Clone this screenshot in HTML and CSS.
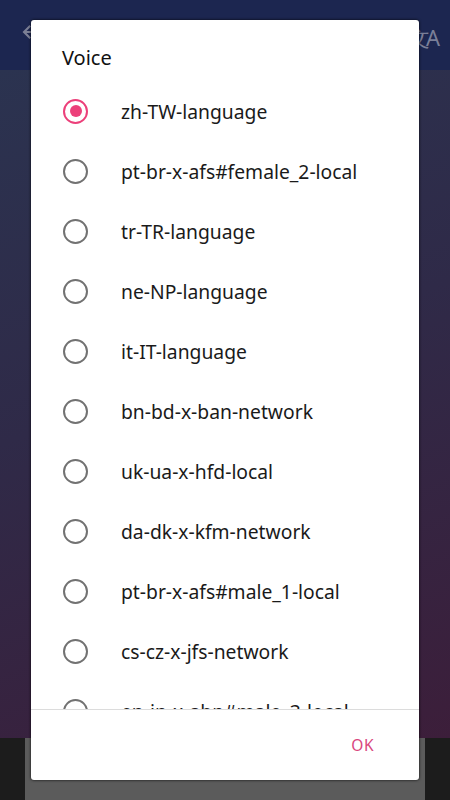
FILE: index.html
```html
<!DOCTYPE html>
<html>
<head>
<meta charset="utf-8">
<link rel="stylesheet" href="styles.css">
</head>
<body>
<div class="app">
  <div class="topbar">
    <svg class="back" width="20" height="20" viewBox="0 0 20 20"><path d="M17 9H6.5l4.5-4.5L9.5 3 2.5 10l7 7 1.5-1.5L6.5 11H17z" fill="#7b7f95"/></svg>
    <span class="trans">文A</span>
  </div>
  <div class="main"></div>
  <div class="bottom">
    <div class="panel"></div>
  </div>
</div>
<div class="dialog">
  <div class="title">Voice</div>
  <div class="list">
    <div class="item"><span class="radio on"></span><span class="label">zh-TW-language</span></div>
    <div class="item"><span class="radio"></span><span class="label">pt-br-x-afs#female_2-local</span></div>
    <div class="item"><span class="radio"></span><span class="label">tr-TR-language</span></div>
    <div class="item"><span class="radio"></span><span class="label">ne-NP-language</span></div>
    <div class="item"><span class="radio"></span><span class="label">it-IT-language</span></div>
    <div class="item"><span class="radio"></span><span class="label">bn-bd-x-ban-network</span></div>
    <div class="item"><span class="radio"></span><span class="label">uk-ua-x-hfd-local</span></div>
    <div class="item"><span class="radio"></span><span class="label">da-dk-x-kfm-network</span></div>
    <div class="item"><span class="radio"></span><span class="label">pt-br-x-afs#male_1-local</span></div>
    <div class="item"><span class="radio"></span><span class="label">cs-cz-x-jfs-network</span></div>
    <div class="item"><span class="radio"></span><span class="label">en-in-x-ahp#male_3-local</span></div>
  </div>
  <div class="footer"><span class="ok">OK</span></div>
</div>
</body>
</html>
```
FILE: styles.css
```css
html, body { margin: 0; padding: 0; }
body { width: 450px; height: 800px; overflow: hidden; font-family: "Noto Sans", "Open Sans", sans-serif; position: relative; }
.app { display: flex; flex-direction: column; height: 800px; }
.topbar { height: 70px; background: #1c2650; display: flex; align-items: center; justify-content: space-between; padding: 0 14px 0 20px; box-sizing: border-box; }
.back { margin-top: -6px; }
.trans { color: #7a7f98; font-size: 22px; margin-top: 6px; letter-spacing: -4px; }
.main { flex: 1; background: linear-gradient(160deg, #2b3350 0%, #2f2a48 45%, #3c1e3a 100%); }
.bottom { height: 62px; background: #1c1c1c; display: flex; padding: 0 25px; }
.panel { flex: 1; background: #5b5b5b; }
.dialog { position: absolute; left: 31px; top: 20px; width: 388px; height: 760px; background: #fff; border-radius: 3px; box-shadow: 0 0 3px rgba(0,0,0,0.9); display: flex; flex-direction: column; }
.title { font-size: 20px; color: #111; padding: 23px 0 0 31px; height: 38px; line-height: 30px; flex-shrink: 0; }
.list { flex: 1; overflow: hidden; display: flex; flex-direction: column; }
.item { height: 60px; flex-shrink: 0; display: flex; align-items: center; padding-left: 32px; box-sizing: border-box; }
.radio { width: 25px; height: 25px; box-sizing: border-box; border: 2.5px solid #727272; border-radius: 50%; margin-right: 33px; display: flex; align-items: center; justify-content: center; flex-shrink: 0; }
.radio.on { border-color: #ec407a; }
.radio.on::after { content: ""; width: 12px; height: 12px; border-radius: 50%; background: #ec407a; }
.label { font-size: 19.3px; color: #1a1a1a; }
.footer { height: 70px; flex-shrink: 0; border-top: 1px solid #dcdcdc; display: flex; align-items: center; justify-content: flex-end; padding-right: 45px; }
.ok { color: #d9457d; font-size: 15.5px; letter-spacing: 0.5px; }
```
